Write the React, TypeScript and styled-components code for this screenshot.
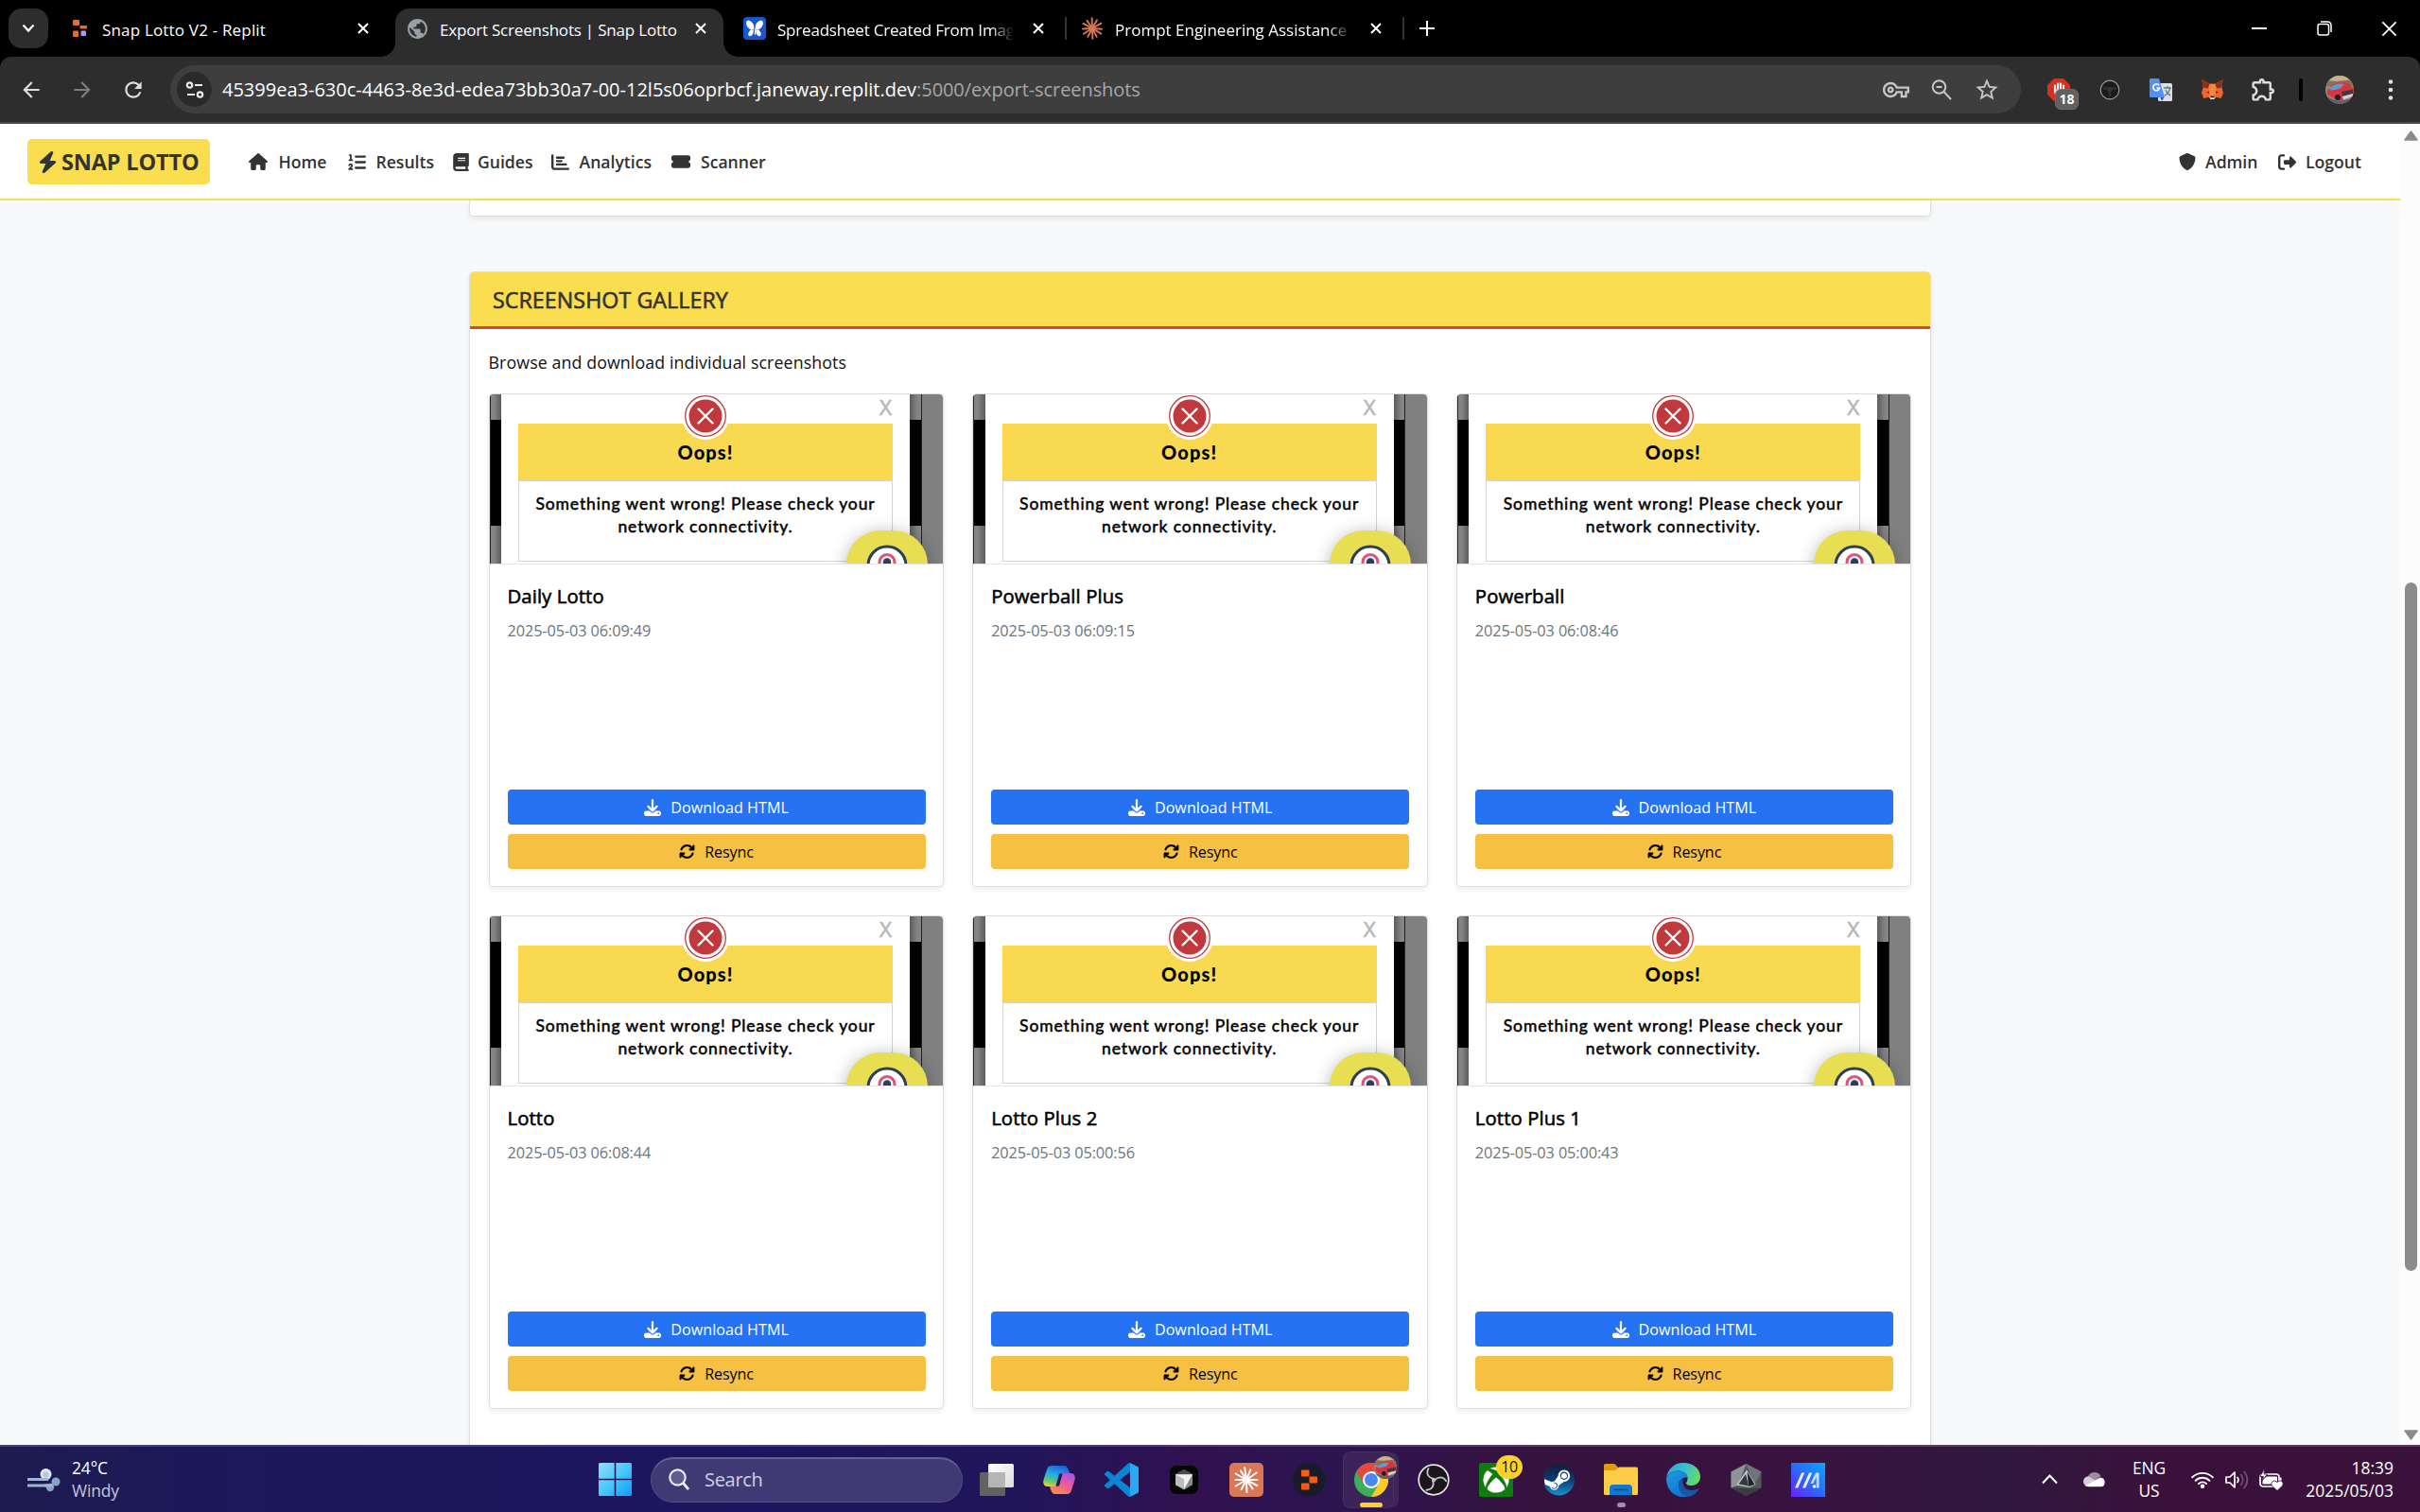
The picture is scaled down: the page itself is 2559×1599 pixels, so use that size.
import React from "react";
import styled, { createGlobalStyle, css } from "styled-components";
import {
  FaHouse,
  FaListOl,
  FaBook,
  FaChartBar,
  FaTicketSimple,
  FaShield,
  FaRightFromBracket,
  FaBolt,
  FaDownload,
  FaArrowsRotate,
  FaXbox,
  FaSteam,
} from "react-icons/fa6";
import {
  MdArrowBack,
  MdArrowForward,
  MdRefresh,
  MdOutlineVpnKey,
  MdStarBorder,
  MdOutlineExtension,
  MdPublic,
} from "react-icons/md";

const Global = createGlobalStyle`
  * { box-sizing: border-box; }
  body { margin: 0; background: #000; font-family: "Open Sans", "Noto Sans", sans-serif; }
  svg { display: block; flex: none; }
`;

const Screen = styled.div`
  width: 2559px;
  height: 1599px;
  display: flex;
  flex-direction: column;
  overflow: hidden;
`;

/* ---------- Browser chrome ---------- */

const TabStrip = styled.div`
  height: 60px;
  flex: none;
  display: flex;
  align-items: flex-start;
  padding: 9px 0 0 9px;
  gap: 10px;
  background: #000;
  color: #fff;
`;

const TabSearch = styled.div`
  width: 42px;
  height: 42px;
  border-radius: 14px;
  background: #2d2d2d;
  display: grid;
  place-items: center;
`;

const flare = css`
  content: "";
  position: absolute;
  bottom: 0;
  width: 15px;
  height: 15px;
`;

const Tab = styled.div<{ $active?: boolean; $divider?: boolean }>`
  position: relative;
  width: 347px;
  height: 51px;
  padding: 0 12px 9px 11px;
  display: flex;
  align-items: center;
  border-radius: 15px 15px 0 0;
  background: ${(p) => (p.$active ? "#2d2d2d" : "transparent")};
  ${(p) =>
    p.$active &&
    css`
      &::before {
        ${flare}
        left: -15px;
        background: radial-gradient(circle at 0 0, transparent 14.5px, #2d2d2d 15px);
      }
      &::after {
        ${flare}
        right: -15px;
        background: radial-gradient(circle at 100% 0, transparent 14.5px, #2d2d2d 15px);
      }
    `}
  ${(p) =>
    p.$divider &&
    css`
      &::after {
        content: "";
        position: absolute;
        right: -6px;
        top: 9px;
        width: 2px;
        height: 24px;
        background: #333;
      }
    `}
`;

const Favicon = styled.div`
  width: 24px;
  height: 24px;
  display: grid;
  place-items: center;
`;

const TabTitle = styled.div<{ $fade?: boolean; $track?: number }>`
  width: 252px;
  margin-left: 12px;
  font-size: 17px;
  letter-spacing: ${(p) => p.$track ?? -0.2}px;
  line-height: 24px;
  padding-top: 3px;
  white-space: nowrap;
  overflow: hidden;
  ${(p) => p.$fade && "mask-image: linear-gradient(90deg, #000 225px, transparent 250px);"}
`;

const TabClose = styled.div`
  width: 24px;
  height: 24px;
  margin-left: 12px;
  display: grid;
  place-items: center;
`;

const NewTab = styled.div`
  width: 42px;
  height: 42px;
  margin-left: -1px;
  display: grid;
  place-items: center;
`;

const WindowButtons = styled.div`
  margin-left: auto;
  margin-right: -2px;
  height: 42px;
  display: flex;
`;

const WindowButton = styled.div`
  width: 69px;
  display: grid;
  place-items: center;
`;

const ToolbarBack = styled.div`
  flex: none;
  background: #000;
`;

const Toolbar = styled.div`
  height: 71px;
  display: flex;
  align-items: center;
  padding-left: 6px;
  background: #2d2d2d;
  border-bottom: 2px solid #4b4b4b;
  border-radius: 12px 12px 0 0;
  color: #dedede;
`;

const ToolSlot = styled.div<{ $w?: number; $dim?: boolean }>`
  position: relative;
  width: ${(p) => p.$w ?? 54}px;
  height: 48px;
  display: grid;
  place-items: center;
  opacity: ${(p) => (p.$dim ? 0.45 : 1)};
`;

const UrlBar = styled.div`
  width: 1957px;
  height: 51px;
  margin-left: 12px;
  margin-right: 13px;
  padding: 0 12px 0 7px;
  border-radius: 26px;
  background: #3e3e3e;
  display: flex;
  align-items: center;
  color: #c7c7c7;
`;

const SiteInfo = styled.div`
  width: 37px;
  height: 37px;
  border-radius: 50%;
  background: #2a2a2a;
  display: grid;
  place-items: center;
`;

const UrlText = styled.div`
  flex: 1;
  margin-left: 11px;
  font-size: 20px;
  letter-spacing: 0;
  color: #fff;
  white-space: nowrap;
`;

const UrlPath = styled.span`
  color: #a8a8a8;
  letter-spacing: -0.08px;
`;

const ExtBadge = styled.div`
  position: absolute;
  left: 23px;
  top: 23px;
  width: 25px;
  height: 22px;
  border-radius: 6px;
  background: #606060;
  border: 1px solid #6d6d6d;
  color: #fff;
  font-size: 14px;
  font-weight: 700;
  line-height: 20px;
  text-align: center;
`;

const ToolDivider = styled.div`
  width: 4px;
  height: 24px;
  margin: 0 12px 0 11px;
  border-radius: 2px;
  background: #000;
`;

/* ---------- Page ---------- */

const Viewport = styled.div`
  flex: 1;
  min-height: 0;
  display: flex;
`;

const Page = styled.div`
  width: 2538px;
  display: flex;
  flex-direction: column;
  background: #f7f9fb;
  overflow: hidden;
`;

const NavBar = styled.div`
  height: 81px;
  flex: none;
  display: flex;
  align-items: center;
  padding: 1px 0 0 29px;
  background: #fff;
  border-bottom: 2px solid #fbdc4d;
  color: #333;
`;

const Brand = styled.div`
  width: 193px;
  height: 48px;
  padding-left: 10px;
  margin-right: 41px;
  display: flex;
  align-items: center;
  border-radius: 5px;
  background: #fbde4f;
  font-size: 23.5px;
  font-weight: 700;
  letter-spacing: -0.15px;
  white-space: nowrap;
`;

const BrandIcon = styled.div`
  width: 26px;
`;

const NavLink = styled.div<{ $w: number }>`
  width: ${(p) => p.$w}px;
  display: flex;
  align-items: center;
  font-size: 17.6px;
  font-weight: 600;
  letter-spacing: 0;
  white-space: nowrap;
`;

const NavIcon = styled.div<{ $w: number }>`
  width: ${(p) => p.$w}px;
  display: flex;
`;

const Spacer = styled.div`
  flex: 1;
`;

const Main = styled.div`
  width: 1546px;
  margin: 0 auto;
`;

const panel = css`
  background: #fff;
  border: 1px solid #dcdee0;
  box-shadow: 0 3px 6px rgba(0, 0, 0, 0.075);
`;

const PreviousPanel = styled.div`
  ${panel}
  height: 17px;
  border-top: 0;
  border-radius: 0 0 5px 5px;
`;

const Gallery = styled.div`
  ${panel}
  height: 1330px;
  margin-top: 58px;
  border-radius: 5px 5px 0 0;
`;

const GalleryHeader = styled.div`
  height: 60px;
  padding-left: 24px;
  background: #fbde4f;
  border-bottom: 3px solid #d8453b;
  border-radius: 4px 4px 0 0;
  color: #333;
  font-size: 23.2px;
  letter-spacing: 0.08px;
  line-height: 59px;
  -webkit-text-stroke: 0.6px #333;
`;

const Lead = styled.div`
  padding: 22px 19.5px 0;
  height: 68px;
  font-size: 17.8px;
  line-height: 27px;
  letter-spacing: 0.1px;
  color: #111;
`;

const Grid = styled.div`
  padding: 0 19.5px;
  display: grid;
  grid-template-columns: repeat(3, 1fr);
  gap: 30px;
`;

const Card = styled.div`
  ${panel}
  height: 522px;
  border-radius: 5px;
  overflow: hidden;
  display: flex;
  flex-direction: column;
`;

const Thumb = styled.div`
  position: relative;
  height: 180px;
  flex: none;
  display: flex;
  overflow: hidden;
  border-bottom: 1px solid #e4e5e7;
  background: #808080;
  font-family: Lato, "Open Sans", sans-serif;
`;

const Backdrop = styled.div<{ $side: "left" | "right" }>`
  width: 12.5px;
  flex: none;
  border-left: ${(p) => (p.$side === "left" ? "1px solid #222" : "0")};
  border-right: ${(p) => (p.$side === "right" ? "1px solid #222" : "0")};
  background: linear-gradient(#000, #000) 0 27px / 100% 112px no-repeat,
    linear-gradient(${(p) => (p.$side === "left" ? "90deg" : "270deg")}, #858585 30%, #5c5c5c);
`;

const Modal = styled.div`
  position: relative;
  flex: 1;
  max-width: 432px;
  padding: 31px 18px 0;
  background: #fff;
`;

const ModalBanner = styled.div`
  height: 60px;
  background: #f9d94f;
  text-align: center;
  font-size: 20px;
  font-weight: 900;
  letter-spacing: 1.1px;
  line-height: 24px;
  padding-top: 18px;
  color: #000;
`;

const ModalText = styled.div`
  height: 86px;
  border: 1px solid #d4d4d4;
  padding-top: 12px;
  text-align: center;
  font-size: 17.5px;
  letter-spacing: 0.9px;
  line-height: 24px;
  color: #000;
  -webkit-text-stroke: 0.5px #000;
`;

const ErrorBadge = styled.div`
  position: absolute;
  left: 191px;
  top: -2px;
`;

const ModalClose = styled.div`
  position: absolute;
  right: 19px;
  top: -1px;
  font-family: "Open Sans", sans-serif;
  font-size: 22.5px;
  line-height: 29px;
  color: #b9b9b9;
  -webkit-text-stroke: 0.7px #b9b9b9;
`;

const ChatBubble = styled.div`
  position: absolute;
  right: 16.5px;
  top: 144px;
  width: 86px;
  height: 86px;
  border-radius: 36px;
  background: #e8de51;
  box-shadow: 0 2px 18px rgba(0, 0, 0, 0.28);
  display: flex;
  justify-content: center;
  padding-top: 15px;
`;

const CardBody = styled.div`
  flex: 1;
  display: flex;
  flex-direction: column;
  padding: 18px 18.5px 18.5px 19px;
`;

const CardTitle = styled.div`
  font-size: 20.3px;
  letter-spacing: 0.1px;
  line-height: 30px;
  color: #000;
  -webkit-text-stroke: 0.55px #000;
`;

const CardDate = styled.div`
  margin-top: 10px;
  font-size: 16.3px;
  letter-spacing: -0.1px;
  line-height: 24px;
  color: #6c757d;
`;

const Actions = styled.div`
  margin-top: auto;
  display: flex;
  flex-direction: column;
  gap: 10px;
`;

const Button = styled.div<{ $kind: "primary" | "warning" }>`
  height: 37px;
  padding-top: 1px;
  display: flex;
  align-items: center;
  justify-content: center;
  gap: 10px;
  border-radius: 4px;
  font-size: 16.1px;
  letter-spacing: ${(p) => (p.$kind === "primary" ? 0.05 : -0.1)}px;
  background: ${(p) => (p.$kind === "primary" ? "#2573f3" : "#f6c042")};
  color: ${(p) => (p.$kind === "primary" ? "#fff" : "#000")};
`;

const ScrollBar = styled.div`
  width: 21px;
  padding: 7px 3px 5px 5px;
  display: flex;
  flex-direction: column;
  align-items: center;
  background: #fcfcfc;
`;

const ScrollThumb = styled.div`
  width: 13px;
  height: 728px;
  margin: 467px 0 auto;
  border-radius: 7px;
  background: #8b8b8b;
`;

/* ---------- Taskbar ---------- */

const TaskBar = styled.div`
  height: 71px;
  flex: none;
  display: flex;
  align-items: center;
  border-top: 2px solid rgba(255, 255, 255, 0.17);
  background: linear-gradient(
    90deg,
    #1e1b50 0,
    #1b185c 260px,
    #1b165f 800px,
    #22155a 1080px,
    #301150 1260px,
    #2c1450 1400px,
    #36123f 1620px,
    #391340 1900px,
    #30183e 2110px,
    #3a113b 2300px,
    #3a113b 100%
  );
  background-origin: border-box;
  color: #fff;
`;

const Weather = styled.div`
  width: 604px;
  padding-left: 29px;
  display: flex;
  align-items: center;
  gap: 12px;
`;

const TwoLines = styled.div<{ $align?: "left" | "center" | "right"; $w?: number }>`
  width: ${(p) => (p.$w ? `${p.$w}px` : "auto")};
  margin-top: -1px;
  font-size: 17.4px;
  letter-spacing: ${(p) => (p.$align === "right" ? 0.05 : -0.1)}px;
  line-height: 24px;
  text-align: ${(p) => p.$align ?? "left"};
  white-space: nowrap;
`;

const Language = styled(TwoLines)`
  margin-right: 5px;
`;

const Muted = styled.div`
  color: #c9c8da;
`;

const StartSlot = styled.div`
  width: 84px;
  padding-left: 29px;
`;

const SearchBox = styled.div`
  width: 330px;
  height: 48px;
  margin-right: 3px;
  padding: 0 0 2px 18px;
  display: flex;
  align-items: center;
  gap: 16px;
  border-radius: 24px;
  border: 1px solid #544e84;
  border-top: 2px solid #66608f;
  background: #3f3974;
  font-size: 20px;
  letter-spacing: -0.3px;
  color: #d2d0e2;
`;

const AppSlot = styled.div`
  position: relative;
  width: 66px;
  height: 60px;
  display: grid;
  place-items: center;
`;

const Highlight = styled.div`
  position: absolute;
  left: 3px;
  top: 0;
  width: 54px;
  height: 60px;
  border-radius: 8px;
  background: rgba(255, 255, 255, 0.07);
  border: 1px solid rgba(255, 255, 255, 0.06);
  box-shadow: 6px 0 0 -1px rgba(255, 255, 255, 0.08);
`;

const Indicator = styled.div<{ $active?: boolean }>`
  position: absolute;
  bottom: 1px;
  left: ${(p) => (p.$active ? 21 : 28.5)}px;
  width: ${(p) => (p.$active ? 24 : 9)}px;
  height: 5px;
  border-radius: 3px;
  background: ${(p) => (p.$active ? "#fdd02c" : "#9e8fa6")};
`;

const CountBadge = styled.div`
  position: absolute;
  left: 33px;
  top: 4px;
  width: 28px;
  height: 25px;
  border-radius: 13px;
  background: #fcd12a;
  color: #111;
  font-size: 16px;
  letter-spacing: -0.5px;
  line-height: 25px;
  text-align: center;
`;

const PhotoBadge = styled.div`
  position: absolute;
  left: 36px;
  top: 5px;
`;

const Tray = styled.div`
  margin-left: auto;
  padding-right: 28px;
  display: flex;
  align-items: center;
`;

const TraySlot = styled.div<{ $w: number }>`
  width: ${(p) => p.$w}px;
  display: grid;
  place-items: center;
`;

/* ---------- Drawings ---------- */

const Cross = ({ size = 12, w = 2 }: { size?: number; w?: number }) => (
  <svg width={size} height={size} viewBox="0 0 12 12" stroke="#fff" strokeWidth={w} fill="none">
    <path d="M1 1 11 11M11 1 1 11" />
  </svg>
);

const ReplitFavicon = () => (
  <svg width="18" height="20" viewBox="0 0 18 20">
    <rect x="2" y="1" width="7" height="6" rx="1" fill="#f26a26" />
    <rect x="9.500" y="7" width="7.500" height="3.500" rx="1" fill="#f26a26" />
    <rect x="2" y="12.500" width="6" height="6.500" rx="1" fill="#ea6a2b" />
    <rect x="10.500" y="12.500" width="5.500" height="5.500" rx="1" fill="#a79af5" />
  </svg>
);

const ButterflyFavicon = () => (
  <svg width="24" height="24" viewBox="0 0 24 24">
    <rect width="24" height="24" rx="4" fill="#1558d0" />
    <ellipse cx="7.200" cy="8.500" rx="3.300" ry="5.500" transform="rotate(-35 7.200 8.500)" fill="#fff" />
    <ellipse cx="16.800" cy="8.500" rx="3.300" ry="5.500" transform="rotate(35 16.800 8.500)" fill="#fff" />
    <ellipse cx="8" cy="16.800" rx="2.300" ry="3.600" transform="rotate(30 8 16.800)" fill="#fff" />
    <ellipse cx="16" cy="16.800" rx="2.300" ry="3.600" transform="rotate(-30 16 16.800)" fill="#fff" />
    <path d="M10 11.500h4l-1.200 8-1.800-3z" fill="#fff" />
    <path d="M12 10.500 11.200 17" stroke="#1558d0" strokeWidth="1" />
  </svg>
);

const Burst = ({ size, color, w = 2 }: { size: number; color: string; w?: number }) => (
  <svg width={size} height={size} viewBox="-12 -12 24 24" stroke={color} strokeWidth={w} strokeLinecap="round">
    {[4, 31, 62, 88, 118, 148, 177, 208, 236, 268, 300, 330].map((a, i) => (
      <line key={a} x1="0" y1="0" x2={i % 2 ? 10.8 : 10} y2="0" transform={`rotate(${a})`} />
    ))}
  </svg>
);

const TuneIcon = () => (
  <svg width="20" height="20" viewBox="0 0 20 20" fill="none" stroke="#e8e8e8" strokeWidth="2.200">
    <circle cx="4.500" cy="5" r="2.700" />
    <path d="M10 5h8M2 15h8" />
    <circle cx="15.500" cy="15" r="2.700" />
  </svg>
);

const ZoomOutIcon = () => (
  <svg width="24" height="24" viewBox="0 0 24 24" fill="none" stroke="currentColor" strokeWidth="2">
    <circle cx="9.500" cy="9" r="6.800" />
    <path d="M6.500 9h6M14.500 14l7.500 8" />
  </svg>
);

const StopHand = () => (
  <svg width="26" height="26" viewBox="0 0 26 26">
    <path d="M8 1h10l7 7v10l-7 7H8l-7-7V8z" fill="#d92f22" />
    <path
      d="M9 8.500v6M12 6.500v7M15 6.500v7M18 8.500v7"
      stroke="#fff"
      strokeWidth="2.100"
      strokeLinecap="round"
      fill="none"
    />
    <path d="M8 13h11v3c0 3-2 5-5 5s-4-1.500-6-5z" fill="#fff" />
  </svg>
);

const WheelIcon = () => (
  <svg width="24" height="24" viewBox="0 0 24 24">
    <circle cx="12" cy="12" r="9.800" fill="#1a1a1a" stroke="#9a9a9a" strokeWidth="1.200" />
    <path d="M5 10.500h14M12 12v7" stroke="#2f2f2f" strokeWidth="2.500" />
    <circle cx="12" cy="11.500" r="2.600" fill="#363636" />
  </svg>
);

const TranslateIcon = () => (
  <svg width="26" height="26" viewBox="0 0 26 26">
    <rect x="10" y="6" width="15" height="19" rx="1.500" fill="#dcdfe3" />
    <path d="M16 11h8M20 9v2M22.500 11c-.5 4-3 7-5.500 8M18 13c1 3 3 5 5 6" stroke="#607d8b" strokeWidth="1.400" fill="none" />
    <path d="M12 20h5l-3 5z" fill="#3352c8" />
    <path d="M2 1h9l6 20H2.500A1.500 1.500 0 0 1 1 19.500V2.500A1.500 1.500 0 0 1 2 1z" fill="#5390f5" />
    <path d="M11 8.300A3.400 3.400 0 1 0 11.600 11H8.500" stroke="#fff" strokeWidth="1.700" fill="none" />
  </svg>
);

const FoxIcon = () => (
  <svg width="25" height="24" viewBox="0 0 26 25">
    <path d="M1.500 1 10 6h6l8.500-5-1.200 9 1.700 6-2.500 6-5.500-1.500-2 2h-4l-2-2L3.500 22 1 16l1.700-6z" fill="#f0662c" />
    <path d="M1.500 1 10 6 8 11l-5.300-1zM24.500 1 16 6l2 5 5.300-1z" fill="#8f2f16" />
    <path d="M10 6h6l1 6-1 7h-6l-1-7z" fill="#f58645" />
    <path d="M9 16.500 6.500 15l3-1zM17 16.500l2.500-1.500-3-1z" fill="#26282e" />
    <path d="M9.500 20h7l-1.500 3h-4z" fill="#f3e6dc" />
    <path d="M11 19.500h4l.5 1.500h-5z" fill="#222" />
  </svg>
);

const CarPhoto = ({ size }: { size: number }) => (
  <svg width={size} height={size} viewBox="0 0 30 30">
    <defs>
      <clipPath id={`round${size}`}>
        <circle cx="15" cy="15" r="15" />
      </clipPath>
    </defs>
    <g clipPath={`url(#round${size})`}>
      <rect width="30" height="30" fill="#8f8a86" />
      <rect width="30" height="9" fill="#c9b08c" />
      <path d="M0 5l12 1 18-2v7H0z" fill="#86705a" />
      <path d="M2 15 7 10l6-2.500h11l4 4.500 2 2v8l-15 5-8-4-5-3z" fill="#d8343a" />
      <path d="M3 14l6-4 5-1.500 6 .5-4 4.500-9 2z" fill="#5d9bd3" />
      <path d="M17 17l12-2.500v4.500l-11 3z" fill="#3b3a48" />
      <path d="M18 22l11-3v3l-10 3.500z" fill="#cfd3dc" />
      <circle cx="13" cy="23" r="3" fill="#1f1f26" />
      <path d="M0 22l14 5 16-3v6H0z" fill="#60606a" />
    </g>
  </svg>
);

const DotsIcon = () => (
  <svg width="6" height="24" viewBox="0 0 6 24" fill="#e0e0e0">
    <circle cx="3" cy="3.500" r="2.300" />
    <circle cx="3" cy="12" r="2.300" />
    <circle cx="3" cy="20.500" r="2.300" />
  </svg>
);

const ErrorMark = () => (
  <svg width="50" height="50" viewBox="0 0 50 50">
    <circle cx="25" cy="25" r="25" fill="#fff" />
    <circle cx="25" cy="25" r="21.300" fill="none" stroke="#c1393d" strokeWidth="1.300" />
    <circle cx="25" cy="25" r="17.500" fill="#c1393d" />
    <path d="M17.500 17.500l15 15M32.500 17.500l-15 15" stroke="#fff" strokeWidth="2.400" strokeLinecap="round" />
  </svg>
);

const EyeMark = () => (
  <svg width="44" height="44" viewBox="0 0 44 44">
    <circle cx="22" cy="22" r="20" fill="#fff" stroke="#2f3d5c" strokeWidth="3" />
    <circle cx="22" cy="18.500" r="8" fill="none" stroke="#e0527c" strokeWidth="3" />
    <circle cx="22" cy="18.500" r="4.300" fill="#2f3d5c" />
  </svg>
);

const WindIcon = () => (
  <svg width="35" height="26" viewBox="0 0 35 26">
    <path d="M1 12.500h20M1 19h24" stroke="#9fb6cf" strokeWidth="3" strokeLinecap="round" />
    <circle cx="19.500" cy="7" r="6" fill="#dfe9f5" />
    <circle cx="19.500" cy="7.500" r="3.200" fill="#b4c8e0" />
    <circle cx="30" cy="15" r="4.500" fill="#86a5c2" />
    <circle cx="24" cy="21" r="4.200" fill="#86a5c2" />
    <path d="M14 12.500h8M18 19h9" stroke="#9fb6cf" strokeWidth="3" />
  </svg>
);

const WindowsLogo = () => (
  <svg width="35" height="35" viewBox="0 0 35 35">
    <defs>
      <linearGradient id="win" x1="0" y1="0" x2="1" y2="1">
        <stop offset="0" stopColor="#8ce0fc" />
        <stop offset=".5" stopColor="#48c8fb" />
        <stop offset="1" stopColor="#0f9bf8" />
      </linearGradient>
    </defs>
    <path
      d="M1.500 0h15.200v16.700H0V1.500A1.500 1.500 0 0 1 1.500 0zM18.300 0h15.200A1.500 1.500 0 0 1 35 1.500v15.200H18.300zM0 18.300h16.700V35H1.500A1.500 1.500 0 0 1 0 33.500zM18.300 18.300H35v15.200a1.500 1.500 0 0 1-1.500 1.500H18.300z"
      fill="url(#win)"
    />
  </svg>
);

const SearchIcon = () => (
  <svg width="22" height="23" viewBox="0 0 22 23" fill="#5f5a90" stroke="#eceaf6" strokeWidth="2.200">
    <circle cx="9.500" cy="9.500" r="8.200" />
    <path d="M15.500 15.500 21 22" strokeWidth="2.800" />
  </svg>
);

const TaskViewIcon = () => (
  <svg width="36" height="34" viewBox="0 0 36 34">
    <defs>
      <linearGradient id="tv" x1="0" y1="0" x2="1" y2="1">
        <stop offset="0" stopColor="#fff" />
        <stop offset="1" stopColor="#dcdcdc" />
      </linearGradient>
    </defs>
    <rect x="0" y="9" width="27" height="25" rx="1.500" fill="#626262" />
    <rect x="9" y="0" width="27" height="25" rx="1.500" fill="url(#tv)" />
    <rect x="9" y="9" width="18" height="16" fill="#b5b5b5" />
  </svg>
);

const CopilotIcon = () => (
  <svg width="34" height="32" viewBox="0 0 34 32">
    <defs>
      <linearGradient id="cpA" x1=".6" y1="0" x2=".2" y2="1">
        <stop offset="0" stopColor="#1d63e0" />
        <stop offset=".45" stopColor="#24b0e0" />
        <stop offset=".75" stopColor="#5ecb6c" />
        <stop offset="1" stopColor="#f3d02c" />
      </linearGradient>
      <linearGradient id="cpB" x1=".8" y1="0" x2=".3" y2="1">
        <stop offset="0" stopColor="#a552e6" />
        <stop offset=".5" stopColor="#ea5ba0" />
        <stop offset="1" stopColor="#ff8a3d" />
      </linearGradient>
    </defs>
    <path d="M9 1h13c3 0 4 2 5 5l1 3h-7c-2 0-3 1-3.500 3L14 23H5c-4 0-5.500-3-4.500-7L4 5c1-3 2.500-4 5-4z" fill="url(#cpA)" />
    <path d="M25 31H13c-3 0-4-2-5-5l-1-3h6c2 0 3-1 3.500-3L20 9h9c4 0 5.500 3 4.500 7L30 27c-1 3-2.500 4-5 4z" fill="url(#cpB)" />
    <path d="M17 9.500h3.500L17 22.500h-3.500z" fill="#22155a" />
  </svg>
);

const VsCodeIcon = () => (
  <svg width="36" height="36" viewBox="0 0 24 24">
    <path
      d="M23.150 2.587L18.210.210a1.494 1.494 0 0 0-1.705.290l-9.460 8.630-4.120-3.128a.999.999 0 0 0-1.276.057L.327 7.261A1 1 0 0 0 .326 8.740L3.899 12 .326 15.260a1 1 0 0 0 .001 1.479L1.650 17.940a.999.999 0 0 0 1.276.057l4.120-3.128 9.460 8.630a1.492 1.492 0 0 0 1.704.290l4.942-2.377A1.500 1.500 0 0 0 24 20.060V3.939a1.500 1.500 0 0 0-.850-1.352zm-5.146 14.861L10.826 12l7.178-5.448v10.896z"
      fill="#0b86d4"
    />
    <path d="M18.004.12 23.150 2.587A1.500 1.500 0 0 1 24 3.939V20.060a1.500 1.500 0 0 1-.85 1.350L18.004 23.880z" fill="#2aa8f2" />
  </svg>
);

const CursorIcon = () => (
  <svg width="30" height="30" viewBox="0 0 30 30">
    <rect width="30" height="30" rx="7" fill="#060606" />
    <path d="M15 4l9 5.200v11L15 25.500l-9-5.300v-11z" fill="#8a8a8a" />
    <path d="M15 4l9 5.200H6z" fill="#4b4b4b" />
    <path d="M6 9.200h18L15 25z" fill="#f2f2f2" />
    <path d="M6 9.200l9 5V25l-9-4.800z" fill="#bdbdbd" />
  </svg>
);

const ClaudeTile = () => (
  <svg width="36" height="36" viewBox="-18 -18 36 36">
    <rect x="-18" y="-18" width="36" height="36" rx="5" fill="#d97757" />
    <g stroke="#fff" strokeWidth="2" strokeLinecap="round">
      {[0, 28, 55, 88, 118, 150, 180, 210, 238, 262, 292, 325].map((a, i) => (
        <line key={a} x1="0" y1="0" x2={i % 2 ? 13 : 11.5} y2="0" transform={`rotate(${a})`} />
      ))}
    </g>
  </svg>
);

const ReplitTile = () => (
  <svg width="36" height="36" viewBox="0 0 36 36">
    <circle cx="18" cy="18" r="17.500" fill="#171c28" />
    <rect x="10" y="7.500" width="8.500" height="7" rx="1" fill="#fd5c10" />
    <rect x="18.500" y="14.500" width="8.500" height="7" rx="1" fill="#fd5c10" />
    <rect x="10" y="21.500" width="8.500" height="7" rx="1" fill="#fd5c10" />
  </svg>
);

const ChromeIcon = () => (
  <svg width="36" height="36" viewBox="-18 -18 36 36">
    <circle r="18" fill="#2da94f" />
    <path d="M0 0 -15.600-9A18 18 0 0 1 15.600-9z" fill="#e33b2e" />
    <path d="M0-9H15.600A18 18 0 0 1 0 18L7.800 4.500z" fill="#fdc812" />
    <path d="M-15.600-9-7.800 4.500 0-9z" fill="#e33b2e" />
    <circle r="9" fill="#fff" />
    <circle r="7" fill="#3a7ff0" />
  </svg>
);

const ObsIcon = () => (
  <svg width="34" height="34" viewBox="-17 -17 34 34">
    <circle r="15.800" fill="#19171b" stroke="#e6e6e6" strokeWidth="1.700" />
    <g fill="none" stroke="#c4c4c4" strokeWidth="1.800" strokeLinecap="round">
      {[0, 120, 240].map((a) => (
        <path key={a} d="M0-1C-5-2-8.500-6-5.500-12" transform={`rotate(${a})`} />
      ))}
    </g>
    <circle r="2.200" fill="#c4c4c4" />
  </svg>
);

const XboxTile = () => (
  <svg width="36" height="36" viewBox="0 0 36 36">
    <rect width="36" height="36" rx="2" fill="#107c10" />
    <FaXbox x="4" y="4" width="28" height="28" size={28} color="#fff" />
  </svg>
);

const SteamIcon = () => (
  <svg width="35" height="34" viewBox="0 0 35 34">
    <defs>
      <linearGradient id="steam" x1="0" y1="0" x2="0" y2="1">
        <stop offset="0" stopColor="#0e1d3f" />
        <stop offset=".5" stopColor="#0c3c74" />
        <stop offset="1" stopColor="#1b90c9" />
      </linearGradient>
    </defs>
    <circle cx="17.500" cy="17" r="15.500" fill="#fff" />
    <FaSteam x="0.500" y="0" size={34} fill="url(#steam)" />
  </svg>
);

const FolderIcon = () => (
  <svg width="36" height="33" viewBox="0 0 36 33">
    <path d="M1.500 0h10l4 4.500H34A1.500 1.500 0 0 1 35.500 6v6H0V1.500A1.500 1.500 0 0 1 1.500 0z" fill="#e09a10" />
    <path d="M0 7h12l4-3.500h18.500A1.500 1.500 0 0 1 36 5v26.500A1.500 1.500 0 0 1 34.500 33h-33A1.500 1.500 0 0 1 0 31.500z" fill="#fdcd45" />
    <path d="M6 33v-7a4 4 0 0 1 4-4h16a4 4 0 0 1 4 4v7z" fill="#1379cf" />
    <path d="M10.500 27.500h15" stroke="#0c4d8d" strokeWidth="1.600" />
  </svg>
);

const EdgeIcon = () => (
  <svg width="36" height="36" viewBox="0 0 36 36">
    <defs>
      <linearGradient id="edgeTop" x1="0" y1=".3" x2="1" y2=".6">
        <stop offset="0" stopColor="#2fa6dd" />
        <stop offset=".5" stopColor="#38c1cf" />
        <stop offset="1" stopColor="#66de5a" />
      </linearGradient>
      <linearGradient id="edgeLeft" x1="0" y1="0" x2=".6" y2="1">
        <stop offset="0" stopColor="#1f9be0" />
        <stop offset="1" stopColor="#1174d2" />
      </linearGradient>
    </defs>
    <path
      d="M0 17C1 6 9 0 18 0c11 0 18 7 18 14.500 0 6.500-5 9.500-9.500 9.500-4 0-5.500-1.500-5.500-2.500s1.500-1.500 1.500-5.500C22.500 11.500 18 8.500 12 8.500 6 8.500 1.500 12 0 17z"
      fill="url(#edgeTop)"
    />
    <path
      d="M0 17C2 12 6.500 8.500 12 8.500c6 0 10.500 3 10.500 7.200C18 14.500 13 18 13 24c0 6 5 11.500 12 11.600-2 .4-4.500.4-7 .4C8 36 0 28 0 17z"
      fill="url(#edgeLeft)"
    />
    <path
      d="M13 24c0-5 2.500-7.500 5.500-8.500-1 2.500-1.500 4-1 6.500 1 5 5.500 7.500 10.500 7 3-.2 5-1.700 6-1.700.8.200-1 3.200-3.500 5.200-1.500 1.500-3.500 2.800-5.500 3.100C18 35.500 13 30 13 24z"
      fill="#1458a6"
    />
  </svg>
);

const ArmouryIcon = () => (
  <svg width="33" height="34" viewBox="0 0 33 34">
    <path d="M16.500 0 32.500 8.500V25.500L16.500 34 .5 25.500V8.500z" fill="#55595d" />
    <path d="M16.500 0 .5 8.500V25.500L8 22.500z" fill="#8f9498" />
    <path d="M16.500 0 32.500 8.500 25 22z" fill="#70757a" />
    <path d="M.5 25.500 16.500 34 32.500 25.500 20 26z" fill="#3a3d41" />
    <path d="M17 6.500 26.500 22 20 25 6 22.500z" fill="#c3c8cc" />
    <path d="M17.500 8.500 25.500 22 19 24z" fill="#202327" />
    <path d="M16 11l3 12.500L8.500 21.500z" fill="#34383c" />
  </svg>
);

const MaTile = () => (
  <svg width="36" height="36" viewBox="0 0 36 36">
    <defs>
      <linearGradient id="ma" x1="0" y1="1" x2="1" y2="0">
        <stop offset="0" stopColor="#6a20f5" />
        <stop offset=".5" stopColor="#2a6bff" />
        <stop offset="1" stopColor="#08a5ff" />
      </linearGradient>
    </defs>
    <rect width="36" height="36" fill="url(#ma)" />
    <path d="M4 26.500 11 10.500h3.200L7.200 26.500zM12 26.500 19 10.500h3.200l-7 16z" fill="#e9ecff" />
    <path d="M20.500 22 26 10.500h3.500v16h-2.800V15l-3.500 7z" fill="#c4dbff" />
    <circle cx="24.500" cy="25" r="1.800" fill="#fff" />
  </svg>
);

const CloudIcon = () => (
  <svg width="24" height="17" viewBox="0 0 24 17">
    <path d="M5.500 16A5.300 5.300 0 0 1 5 5.500 7.500 7.500 0 0 1 18.500 5L13 9z" fill="#9b8b9f" />
    <path d="M0 11a5.300 5.300 0 0 1 6-5.500L22 16H5.500A5.300 5.300 0 0 1 0 11z" fill="#d6cfd8" />
    <path d="M2 15.500 14 8.500l4-2a5 5 0 0 1 1 9.800H5z" fill="#fff" />
  </svg>
);

const WifiIcon = () => (
  <svg width="24" height="18" viewBox="0 0 24 18" fill="none" stroke="#fff" strokeWidth="1.900" strokeLinecap="round">
    <path d="M1.200 6.300a15.400 15.400 0 0 1 21.600 0M4.600 9.800a10.500 10.500 0 0 1 14.800 0M7.900 13.100a5.800 5.800 0 0 1 8.200 0" />
    <circle cx="12" cy="15.700" r="1.300" fill="#fff" />
  </svg>
);

const VolumeIcon = () => (
  <svg width="25" height="20" viewBox="0 0 25 20" fill="none" stroke="#fff" strokeWidth="1.700" strokeLinecap="round" strokeLinejoin="round">
    <path d="M1 7h4l5-5v16l-5-5H1z" />
    <path d="M13 7.500a4 4 0 0 1 0 5" />
    <path d="M16.500 4.500a8 8 0 0 1 0 11M20 1.500a12.500 12.500 0 0 1 0 17" stroke="#6f5272" />
  </svg>
);

const BatteryIcon = () => (
  <svg width="25" height="24" viewBox="0 0 25 24">
    <rect x="1" y="6" width="20" height="13" rx="3" fill="none" stroke="#fff" strokeWidth="1.700" />
    <path d="M22.500 9.500V14" stroke="#fff" strokeWidth="2" />
    <path d="M8 8.500h11V14l-5 2.500H3.500v-5z" fill="#fff" />
    <path d="M5.500 0 1 8.500h3.500L3 13l5.500-7H5z" fill="#fff" stroke="#3a113b" strokeWidth=".8" />
    <path d="M19 23.500l-5.500-5.300a3.200 3.200 0 0 1 4.500-4.500l1 .9 1-.9a3.200 3.200 0 0 1 4.500 4.500z" fill="#fff" stroke="#3a113b" strokeWidth=".8" />
  </svg>
);

/* ---------- Content ---------- */

const tabs = [
  { title: "Snap Lotto V2 - Replit", icon: <ReplitFavicon />, track: 0.18 },
  { title: "Export Screenshots | Snap Lotto", icon: <MdPublic size={25} color="#9aa0a6" />, active: true },
  { title: "Spreadsheet Created From Image", icon: <ButterflyFavicon />, fade: true, divider: true },
  {
    title: "Prompt Engineering Assistance",
    icon: <Burst size={24} color="#d97757" w={1.9} />,
    fade: true,
    divider: true,
    track: 0,
  },
];

const links = [
  { label: "Home", icon: <FaHouse size={20} />, iconW: 31.5, w: 105 },
  { label: "Results", icon: <FaListOl size={19} />, iconW: 29.5, w: 110 },
  { label: "Guides", icon: <FaBook size={19} />, iconW: 27, w: 105 },
  { label: "Analytics", icon: <FaChartBar size={19} />, iconW: 29.5, w: 127 },
  { label: "Scanner", icon: <FaTicketSimple size={20} />, iconW: 31, w: 110 },
];

const shots = [
  { name: "Daily Lotto", date: "2025-05-03 06:09:49" },
  { name: "Powerball Plus", date: "2025-05-03 06:09:15" },
  { name: "Powerball", date: "2025-05-03 06:08:46" },
  { name: "Lotto", date: "2025-05-03 06:08:44" },
  { name: "Lotto Plus 2", date: "2025-05-03 05:00:56" },
  { name: "Lotto Plus 1", date: "2025-05-03 05:00:43" },
];

const ShotCard = ({ name, date }: { name: string; date: string }) => (
  <Card>
    <Thumb>
      <Backdrop $side="left" />
      <Modal>
        <ErrorBadge>
          <ErrorMark />
        </ErrorBadge>
        <ModalClose>X</ModalClose>
        <ModalBanner>Oops!</ModalBanner>
        <ModalText>
          Something went wrong! Please check your
          <br />
          network connectivity.
        </ModalText>
      </Modal>
      <Backdrop $side="right" />
      <ChatBubble>
        <EyeMark />
      </ChatBubble>
    </Thumb>
    <CardBody>
      <CardTitle>{name}</CardTitle>
      <CardDate>{date}</CardDate>
      <Actions>
        <Button $kind="primary">
          <FaDownload size={18} />
          Download HTML
        </Button>
        <Button $kind="warning">
          <FaArrowsRotate size={17} />
          Resync
        </Button>
      </Actions>
    </CardBody>
  </Card>
);

export default function App() {
  return (
    <Screen>
      <Global />
      <TabStrip>
        <TabSearch>
          <svg width="14" height="10" viewBox="0 0 14 10" fill="none" stroke="#fff" strokeWidth="2.200">
            <path d="M1.500 1.500 7 7.500l5.500-6" />
          </svg>
        </TabSearch>
        {tabs.map((t) => (
          <Tab key={t.title} $active={t.active} $divider={t.divider}>
            <Favicon>{t.icon}</Favicon>
            <TabTitle $fade={t.fade} $track={t.track}>
              {t.title}
            </TabTitle>
            <TabClose>
              <Cross />
            </TabClose>
          </Tab>
        ))}
        <NewTab>
          <svg width="16" height="16" viewBox="0 0 16 16" stroke="#fff" strokeWidth="2">
            <path d="M8 0v16M0 8h16" />
          </svg>
        </NewTab>
        <WindowButtons>
          <WindowButton>
            <svg width="16" height="2" viewBox="0 0 16 2">
              <rect width="16" height="2" fill="#fff" />
            </svg>
          </WindowButton>
          <WindowButton>
            <svg width="16" height="16" viewBox="0 0 16 16" fill="none" stroke="#fff" strokeWidth="1.500">
              <rect x="1" y="3.500" width="11.500" height="11.500" rx="2" />
              <path d="M4 1h7.500A3.500 3.500 0 0 1 15 4.500V12" />
            </svg>
          </WindowButton>
          <WindowButton>
            <Cross size={17} w={1.3} />
          </WindowButton>
        </WindowButtons>
      </TabStrip>

      <ToolbarBack>
        <Toolbar>
          <ToolSlot>
            <MdArrowBack size={26} />
          </ToolSlot>
          <ToolSlot $dim>
            <MdArrowForward size={26} />
          </ToolSlot>
          <ToolSlot>
            <MdRefresh size={26} />
          </ToolSlot>
          <UrlBar>
            <SiteInfo>
              <TuneIcon />
            </SiteInfo>
            <UrlText>
              45399ea3-630c-4463-8e3d-edea73bb30a7-00-12l5s06oprbcf.janeway.replit.dev
              <UrlPath>:5000/export-screenshots</UrlPath>
            </UrlText>
            <ToolSlot $w={48}>
              <MdOutlineVpnKey size={28} />
            </ToolSlot>
            <ToolSlot $w={48}>
              <ZoomOutIcon />
            </ToolSlot>
            <ToolSlot $w={48}>
              <MdStarBorder size={28} />
            </ToolSlot>
          </UrlBar>
          <ToolSlot>
            <StopHand />
            <ExtBadge>18</ExtBadge>
          </ToolSlot>
          <ToolSlot>
            <WheelIcon />
          </ToolSlot>
          <ToolSlot>
            <TranslateIcon />
          </ToolSlot>
          <ToolSlot>
            <FoxIcon />
          </ToolSlot>
          <ToolSlot>
            <MdOutlineExtension size={29} />
          </ToolSlot>
          <ToolDivider />
          <ToolSlot>
            <CarPhoto size={30} />
          </ToolSlot>
          <ToolSlot>
            <DotsIcon />
          </ToolSlot>
        </Toolbar>
      </ToolbarBack>

      <Viewport>
        <Page>
          <NavBar>
            <Brand>
              <BrandIcon>
                <FaBolt size={23} />
              </BrandIcon>
              SNAP LOTTO
            </Brand>
            {links.map((l) => (
              <NavLink key={l.label} $w={l.w}>
                <NavIcon $w={l.iconW}>{l.icon}</NavIcon>
                {l.label}
              </NavLink>
            ))}
            <Spacer />
            <NavLink $w={105}>
              <NavIcon $w={28}>
                <FaShield size={18} />
              </NavIcon>
              Admin
            </NavLink>
            <NavLink $w={129}>
              <NavIcon $w={29}>
                <FaRightFromBracket size={19} />
              </NavIcon>
              Logout
            </NavLink>
          </NavBar>
          <Main>
            <PreviousPanel />
            <Gallery>
              <GalleryHeader>SCREENSHOT GALLERY</GalleryHeader>
              <Lead>Browse and download individual screenshots</Lead>
              <Grid>
                {shots.map((s) => (
                  <ShotCard key={s.name} {...s} />
                ))}
              </Grid>
            </Gallery>
          </Main>
        </Page>
        <ScrollBar>
          <svg width="15" height="11" viewBox="0 0 15 11">
            <path d="M7.500 1 14 10H1z" fill="#8b8b8b" stroke="#8b8b8b" strokeWidth="1.500" strokeLinejoin="round" />
          </svg>
          <ScrollThumb />
          <svg width="15" height="11" viewBox="0 0 15 11">
            <path d="M7.500 10 14 1H1z" fill="#8b8b8b" stroke="#8b8b8b" strokeWidth="1.500" strokeLinejoin="round" />
          </svg>
        </ScrollBar>
      </Viewport>

      <TaskBar>
        <Weather>
          <WindIcon />
          <TwoLines>
            24°C
            <Muted>Windy</Muted>
          </TwoLines>
        </Weather>
        <StartSlot>
          <WindowsLogo />
        </StartSlot>
        <SearchBox>
          <SearchIcon />
          Search
        </SearchBox>
        <AppSlot>
          <TaskViewIcon />
        </AppSlot>
        <AppSlot>
          <CopilotIcon />
        </AppSlot>
        <AppSlot>
          <VsCodeIcon />
        </AppSlot>
        <AppSlot>
          <CursorIcon />
        </AppSlot>
        <AppSlot>
          <ClaudeTile />
        </AppSlot>
        <AppSlot>
          <ReplitTile />
        </AppSlot>
        <AppSlot>
          <Highlight />
          <ChromeIcon />
          <PhotoBadge>
            <CarPhoto size={24} />
          </PhotoBadge>
          <Indicator $active />
        </AppSlot>
        <AppSlot>
          <ObsIcon />
        </AppSlot>
        <AppSlot>
          <XboxTile />
          <CountBadge>10</CountBadge>
        </AppSlot>
        <AppSlot>
          <SteamIcon />
        </AppSlot>
        <AppSlot>
          <FolderIcon />
          <Indicator />
        </AppSlot>
        <AppSlot>
          <EdgeIcon />
        </AppSlot>
        <AppSlot>
          <ArmouryIcon />
        </AppSlot>
        <AppSlot>
          <MaTile />
        </AppSlot>
        <Tray>
          <TraySlot $w={48}>
            <svg width="17" height="11" viewBox="0 0 17 11" fill="none" stroke="#fff" strokeWidth="2">
              <path d="M1 9.500 8.500 1.500l7.500 8" />
            </svg>
          </TraySlot>
          <TraySlot $w={48}>
            <CloudIcon />
          </TraySlot>
          <Language $align="center" $w={67}>
            ENG
            <div>US</div>
          </Language>
          <TraySlot $w={36}>
            <WifiIcon />
          </TraySlot>
          <TraySlot $w={36}>
            <VolumeIcon />
          </TraySlot>
          <TraySlot $w={36}>
            <BatteryIcon />
          </TraySlot>
          <TwoLines $align="right" $w={112}>
            18:39
            <div>2025/05/03</div>
          </TwoLines>
        </Tray>
      </TaskBar>
    </Screen>
  );
}
